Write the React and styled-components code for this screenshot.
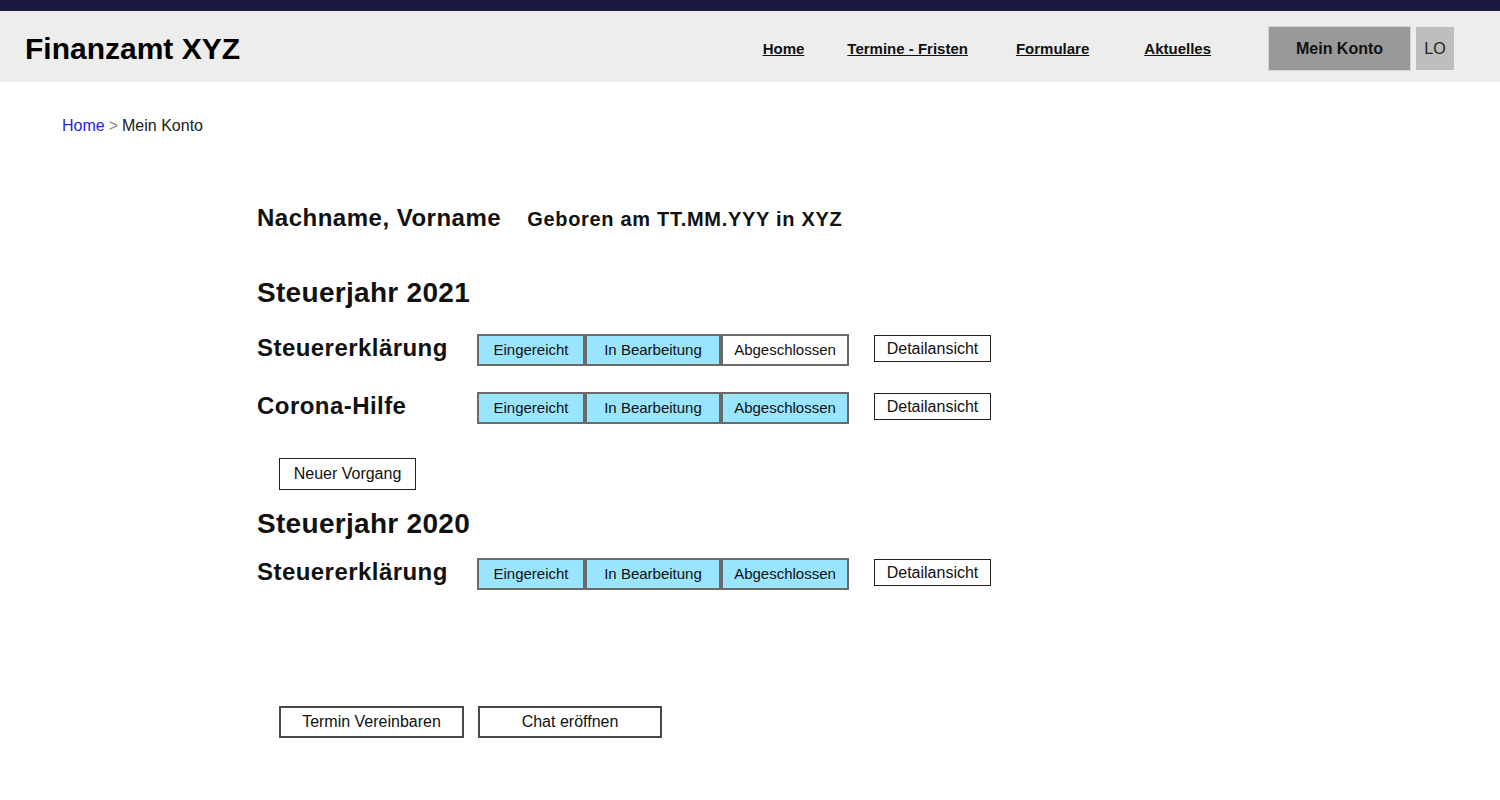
import React from "react";
import styled, { createGlobalStyle } from "styled-components";

const GlobalStyle = createGlobalStyle`
  body {
    margin: 0;
    background: #ffffff;
    font-family: "Liberation Sans", Arial, sans-serif;
    color: #111;
  }
`;

const TopStrip = styled.div`
  height: 11px;
  background: #1a1a3e;
`;

const Header = styled.header`
  box-sizing: border-box;
  height: 71px;
  background: #ededed;
  display: flex;
  align-items: center;
  padding: 4px 46px 0 25px;
`;

const Title = styled.h1`
  margin: 0;
  font-size: 30px;
  font-weight: bold;
  color: #000;
`;

const Nav = styled.nav`
  margin-left: auto;
  display: flex;
  align-items: center;
`;

const NavLink = styled.a`
  font-size: 15px;
  font-weight: bold;
  color: #111;
  text-decoration: underline;
  margin-left: ${(p) => p.$ml || 0}px;
  cursor: pointer;
`;

const AccountButton = styled.button`
  margin-left: 57px;
  width: 143px;
  height: 45px;
  background: #999999;
  border: 1px solid #d4d4d4;
  font-family: inherit;
  font-size: 16px;
  font-weight: bold;
  color: #111;
  padding: 0;
`;

const LogoutButton = styled.button`
  margin-left: 5px;
  width: 38px;
  height: 43px;
  background: #bdbdbd;
  border: none;
  font-family: inherit;
  font-size: 16px;
  color: #222;
  padding: 0;
`;

const Main = styled.main`
  padding: 35px 0 40px 62px;
`;

const Breadcrumb = styled.div`
  font-size: 16px;
  line-height: 18px;
  color: #222;
`;

const Crumb = styled.a`
  color: #2323ee;
  text-decoration: none;
`;

const Sep = styled.span`
  color: #888;
  margin: 0 4px;
`;

const Content = styled.section`
  padding-left: 195px;
`;

const Person = styled.div`
  margin-top: 68px;
  display: flex;
  align-items: baseline;
  gap: 26px;
`;

const Name = styled.span`
  font-size: 24px;
  line-height: 30px;
  font-weight: bold;
  letter-spacing: 0.5px;
`;

const Birth = styled.span`
  font-size: 20px;
  font-weight: bold;
  letter-spacing: 0.7px;
`;

const YearTitle = styled.h2`
  margin: ${(p) => p.$mt}px 0 0;
  font-size: 28px;
  line-height: 34px;
  font-weight: bold;
  letter-spacing: 0.3px;
`;

const CaseRow = styled.div`
  margin-top: ${(p) => p.$mt}px;
  display: flex;
  align-items: flex-start;
`;

const CaseLabel = styled.div`
  width: 220px;
  padding-top: 1px;
  font-size: 24px;
  line-height: 26px;
  font-weight: bold;
  letter-spacing: 0.45px;
`;

const Status = styled.div`
  display: flex;
`;

const Step = styled.div`
  width: ${(p) => p.$w}px;
  height: 32px;
  box-sizing: border-box;
  border: 2px solid #6a6a6a;
  background: ${(p) => (p.$done ? "#99e5ff" : "#ffffff")};
  display: flex;
  align-items: center;
  justify-content: center;
  padding-bottom: 1px;
  font-size: 15px;
  color: #111;
`;

const OutlineButton = styled.button`
  box-sizing: border-box;
  height: ${(p) => p.$h || 32}px;
  width: ${(p) => p.$w}px;
  margin: ${(p) => p.$m || "0"};
  background: #fff;
  border: ${(p) => p.$bw || 1}px solid ${(p) => p.$bc || "#222"};
  font-family: inherit;
  font-size: 16px;
  color: #111;
  padding: 0;
`;

const Actions = styled.div`
  margin: 116px 0 0 22px;
  display: flex;
  gap: 14px;
`;

const steps = [
  { label: "Eingereicht", w: 108 },
  { label: "In Bearbeitung", w: 136 },
  { label: "Abgeschlossen", w: 128 },
];

function Case({ label, done, mt }) {
  return (
    <CaseRow $mt={mt}>
      <CaseLabel>{label}</CaseLabel>
      <Status>
        {steps.map((s, i) => (
          <Step key={s.label} $w={s.w} $done={i < done}>
            {s.label}
          </Step>
        ))}
      </Status>
      <OutlineButton $w={117} $h={27} $m="1px 0 0 25px">
        Detailansicht
      </OutlineButton>
    </CaseRow>
  );
}

export default function App() {
  return (
    <>
      <GlobalStyle />
      <TopStrip />
      <Header>
        <Title>Finanzamt XYZ</Title>
        <Nav>
          <NavLink>Home</NavLink>
          <NavLink $ml={43}>Termine - Fristen</NavLink>
          <NavLink $ml={48}>Formulare</NavLink>
          <NavLink $ml={55}>Aktuelles</NavLink>
          <AccountButton>Mein Konto</AccountButton>
          <LogoutButton>LO</LogoutButton>
        </Nav>
      </Header>
      <Main>
        <Breadcrumb>
          <Crumb>Home</Crumb>
          <Sep>&gt;</Sep>
          Mein Konto
        </Breadcrumb>
        <Content>
          <Person>
            <Name>Nachname, Vorname</Name>
            <Birth>Geboren am TT.MM.YYY in XYZ</Birth>
          </Person>

          <YearTitle $mt={43}>Steuerjahr 2021</YearTitle>
          <Case label="Steuererklärung" done={2} mt={24} />
          <Case label="Corona-Hilfe" done={3} mt={26} />
          <OutlineButton $w={137} $m="34px 0 0 22px">
            Neuer Vorgang
          </OutlineButton>

          <YearTitle $mt={17}>Steuerjahr 2020</YearTitle>
          <Case label="Steuererklärung" done={3} mt={17} />

          <Actions>
            <OutlineButton $w={185} $bw={2} $bc="#4a4a4a">
              Termin Vereinbaren
            </OutlineButton>
            <OutlineButton $w={184} $bw={2} $bc="#4a4a4a">
              Chat eröffnen
            </OutlineButton>
          </Actions>
        </Content>
      </Main>
    </>
  );
}
